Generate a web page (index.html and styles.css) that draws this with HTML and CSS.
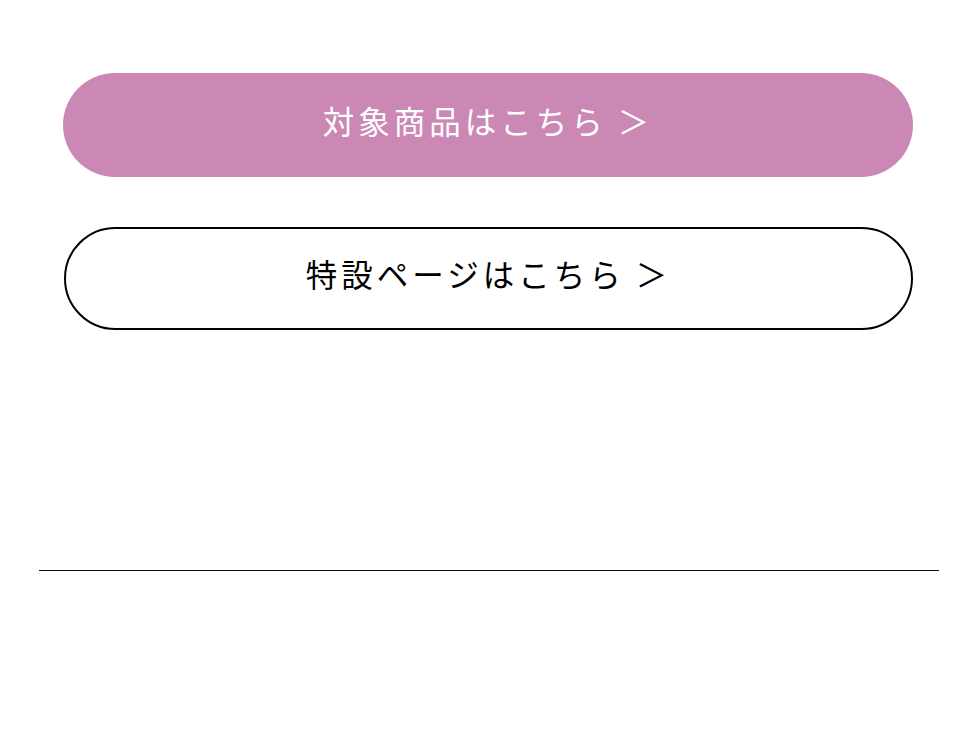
FILE: index.html
```html
<!DOCTYPE html>
<html lang="ja">
<head>
<meta charset="utf-8">
<link rel="stylesheet" href="styles.css">
</head>
<body>
<main class="page">
  <div class="buttons">
    <a class="btn btn-pink" href="#">対象商品はこちら ＞</a>
    <a class="btn btn-outline" href="#">特設ページはこちら ＞</a>
  </div>
  <hr class="divider">
</main>
</body>
</html>
```
FILE: styles.css
```css
html, body {
  margin: 0;
  padding: 0;
  background: #fff;
}
.page {
  width: 980px;
  font-family: "Noto Sans CJK JP", "Noto Sans", sans-serif;
}
.buttons {
  display: flex;
  flex-direction: column;
  gap: 50px;
  padding: 73px 0 0 63px;
}
.btn {
  display: flex;
  align-items: center;
  justify-content: center;
  box-sizing: border-box;
  width: 850px;
  height: 104px;
  padding-bottom: 9px;
  border-radius: 52px;
  font-size: 31.5px;
  line-height: 1;
  letter-spacing: 4px;
  text-decoration: none;
  font-weight: 400;
}
.btn-pink {
  background: #cc88b4;
  color: #fff;
}
.btn-outline {
  height: 103px;
  width: 849px;
  margin-left: 1px;
  border: 2px solid #000;
  color: #000;
}
.divider {
  margin: 240px 0 0 39px;
  width: 900px;
  border: 0;
  border-top: 1px solid #111;
  height: 0;
}
```
